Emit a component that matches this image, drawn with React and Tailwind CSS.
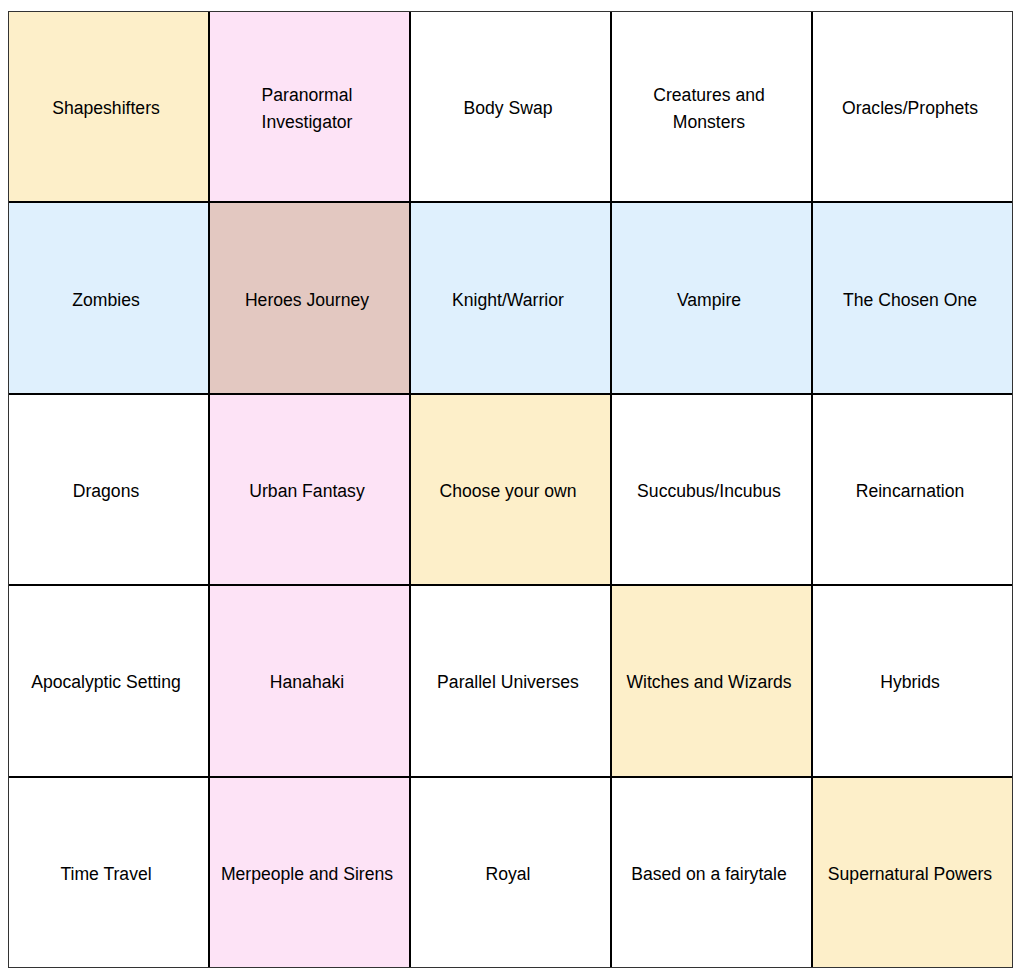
import React from 'react';

const Y = 'bg-[#fdefc9]';
const P = 'bg-[#fde3f6]';
const B = 'bg-[#dff0fd]';
const R = 'bg-[#e3c8c1]';
const W = 'bg-white';

const cells = [
  ['Shapeshifters', Y],
  ['Paranormal\nInvestigator', P],
  ['Body Swap', W],
  ['Creatures and\nMonsters', W],
  ['Oracles/Prophets', W],
  ['Zombies', B],
  ['Heroes Journey', R],
  ['Knight/Warrior', B],
  ['Vampire', B],
  ['The Chosen One', B],
  ['Dragons', W],
  ['Urban Fantasy', P],
  ['Choose your own', Y],
  ['Succubus/Incubus', W],
  ['Reincarnation', W],
  ['Apocalyptic Setting', W],
  ['Hanahaki', P],
  ['Parallel Universes', W],
  ['Witches and Wizards', Y],
  ['Hybrids', W],
  ['Time Travel', W],
  ['Merpeople and Sirens', P],
  ['Royal', W],
  ['Based on a fairytale', W],
  ['Supernatural Powers', Y],
];

const App = () => {
  return (
    <div className="min-h-screen bg-white pl-[8px] pt-[11px]">
      <div className="grid grid-cols-5 grid-rows-5 gap-[2px] w-[1005px] h-[957px] bg-black border border-[#333]">
        {cells.map(([label, bg]) => (
          <div
            key={label}
            className={`${bg} flex items-center justify-center text-center whitespace-pre-line pt-[4px] pr-[5px] text-[17.6px] leading-[27px] text-black font-['Liberation_Sans',Arial,sans-serif]`}
          >
            {label}
          </div>
        ))}
      </div>
    </div>
  );
};

export default App;
